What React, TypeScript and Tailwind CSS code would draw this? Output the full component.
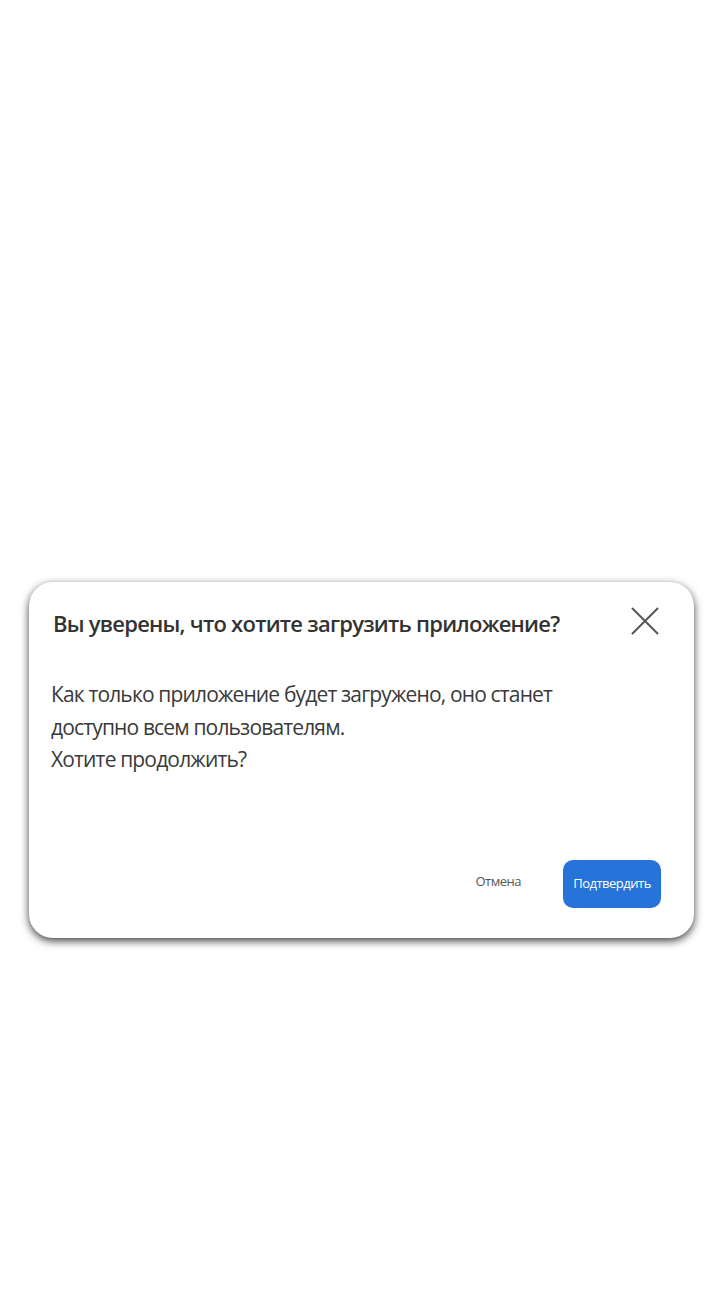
export default function App() {
  return (
    <div className="min-h-[1291px] w-full bg-white px-[29px] pt-[582px]" style={{ fontFamily: '"Open Sans", "Noto Sans", sans-serif' }}>
      <div className="flex h-[356px] w-[665px] flex-col rounded-[24px] bg-white px-[22px] pt-[26px] pb-[30px] shadow-[0_3px_9px_rgba(0,0,0,0.75)]">
        <div className="flex items-start justify-between">
          <h2 className="pl-[2px] text-[22px] leading-[30px] font-semibold tracking-[-0.75px] text-[#333]">
            Вы уверены, что хотите загрузить приложение?
          </h2>
          <button className="mr-[13px] mt-[-1px] text-[#555]" aria-label="Закрыть">
            <svg width="28" height="28" viewBox="0 0 28 28" fill="none" stroke="currentColor" strokeWidth="2" strokeLinecap="round">
              <path d="M1.5 1.5 L26.5 26.5 M26.5 1.5 L1.5 26.5" />
            </svg>
          </button>
        </div>
        <p className="mt-[40px] text-[21px] leading-[32.5px] tracking-[-0.85px] text-[#3a3a3a]">
          Как только приложение будет загружено, оно станет
          <br />
          доступно всем пользователям.
          <br />
          Хотите продолжить?
        </p>
        <div className="mt-auto flex items-center justify-end gap-[42px] pr-[11px]">
          <button className="mt-[-4px] text-[13px] tracking-[-0.5px] text-[#555]">Отмена</button>
          <button className="h-[48px] w-[98px] rounded-[10px] bg-[#2674d9] text-[13px] tracking-[-0.5px] text-white">
            Подтвердить
          </button>
        </div>
      </div>
    </div>
  );
}
